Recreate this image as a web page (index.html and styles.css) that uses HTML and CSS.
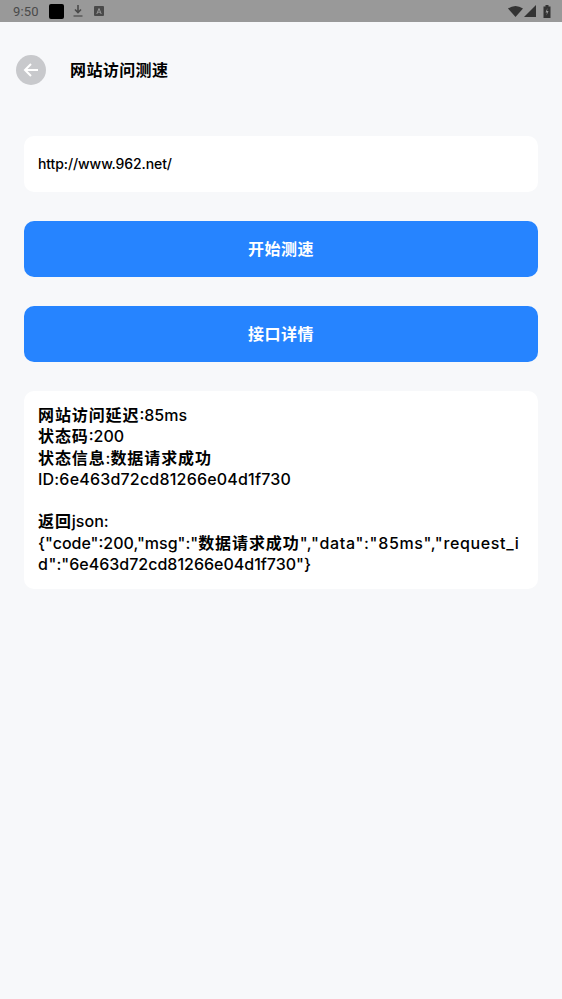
FILE: index.html
```html
<!DOCTYPE html>
<html lang="zh-CN">
<head>
<meta charset="utf-8">
<title>网站访问测速</title>
<link rel="stylesheet" href="styles.css">
</head>
<body>
<div class="statusbar">
  <div class="status-left">
    <span class="time">9:50</span>
    <span class="black-box"></span>
    <svg class="ic-download" width="12" height="14" viewBox="0 0 12 14"><path d="M6 1v7M3 5.500 6 8.500 9 5.500" fill="none" stroke="#4a4a4a" stroke-width="1.600"/><path d="M1.500 12h9" stroke="#4a4a4a" stroke-width="1.200"/></svg>
    <svg class="ic-a" width="10" height="10" viewBox="0 0 10 10"><rect width="10" height="10" rx="1" fill="#4a4a4a"/><path d="M2.800 8 5 2.500 7.200 8M3.700 6.200h2.600" fill="none" stroke="#999" stroke-width="1"/></svg>
  </div>
  <div class="status-right">
    <svg width="15" height="11" viewBox="0 0 15 11"><path d="M0 2.500Q7.500-2.500 15 2.500L7.500 11Z" fill="#333"/></svg>
    <svg width="12" height="12" viewBox="0 0 12 12"><path d="M12 0V12H0Z" fill="#333"/></svg>
    <svg class="ic-batt" width="8" height="13" viewBox="0 0 8 13"><path d="M2.500 0h3v1.500H7.500V13H.5V1.500h2Z" fill="#333"/><path d="M4.500 3 2.500 7.500h1.500L3.500 10.500 5.500 6H4Z" fill="#999"/></svg>
  </div>
</div>

<header class="topbar">
  <span class="back">
    <svg width="18" height="18" viewBox="0 0 18 18"><path d="M16 9H3M9 3 3 9l6 6" fill="none" stroke="#fff" stroke-width="2"/></svg>
  </span>
  <h1 class="title">网站访问测速</h1>
</header>

<main class="content">
  <div class="card input-card">http://www.962.net/</div>
  <button class="btn"><span class="btn-label">开始测速</span></button>
  <button class="btn"><span class="btn-label">接口详情</span></button>
  <div class="card result"><span class="cjk">网站访问延迟</span>:85ms<br><span class="cjk">状态码</span>:200<br><span class="cjk">状态信息</span>:<span class="cjk">数据请求成功</span><br><span class="mono-id">ID:6e463d72cd81266e04d1f730</span><br><br><span class="cjk">返回</span>json:<br>{"code":200,"msg":"<span class="cjk">数据请求成功</span><span class="tail">","data":"85ms","request_id</span>":"6e463d72cd81266e04d1f730"}</div>
</main>
</body>
</html>
```
FILE: styles.css
```css
* { box-sizing: border-box; }
html, body { margin: 0; padding: 0; }
body {
  width: 562px;
  height: 999px;
  overflow: hidden;
  background: #f7f8fa;
  color: #000;
  font-family: "Inter", "Noto Sans CJK SC", sans-serif;
}
.statusbar {
  height: 22px;
  background: #999;
  display: flex;
  justify-content: space-between;
  align-items: center;
  padding: 0 11px 0 13px;
}
.status-left, .status-right { display: flex; align-items: center; }
.time { font-family: "Roboto", sans-serif; font-size: 13px; color: #4a4a4a; width: 36px; letter-spacing: 0.2px; }
.black-box { width: 15px; height: 15px; background: #000; border-radius: 2px; margin-right: 8px; }
.ic-a { margin-left: 10px; }
.status-right { gap: 1px; }
.ic-batt { margin-left: 6px; }
.topbar {
  display: flex;
  align-items: center;
  height: 30px;
  margin: 33px 0 0 16px;
}
.back {
  width: 30px;
  height: 30px;
  border-radius: 50%;
  background: #c8c9cc;
  display: flex;
  align-items: center;
  justify-content: center;
}
.title {
  margin: 0 0 0 24px;
  font-size: 16px;
  line-height: 30px;
  font-weight: 700;
  letter-spacing: 0.4px;
}
.content {
  display: flex;
  flex-direction: column;
  gap: 29px;
  margin: 51px 24px 0;
}
.card { background: #fff; border-radius: 10px; }
.input-card {
  height: 56px;
  padding: 0 14px;
  line-height: 56px;
  font-size: 14px;
  font-weight: 500;
  letter-spacing: -0.1px;
}
.btn {
  height: 56px;
  padding: 0 0 2px;
  border: 0;
  border-radius: 10px;
  background: #2684ff;
  color: #fff;
  font: 700 16px "Inter", "Noto Sans CJK SC", sans-serif;
  letter-spacing: 0.5px;
}
.result {
  padding: 14px 14px 14px;
  font-size: 16px;
  line-height: 21.3px;
  font-weight: 500;
  word-break: break-all;
}
.cjk { font-weight: 700; letter-spacing: 0.9px; }
.mono-id { letter-spacing: 0.2px; }
.tail { letter-spacing: 0.65px; }
```
